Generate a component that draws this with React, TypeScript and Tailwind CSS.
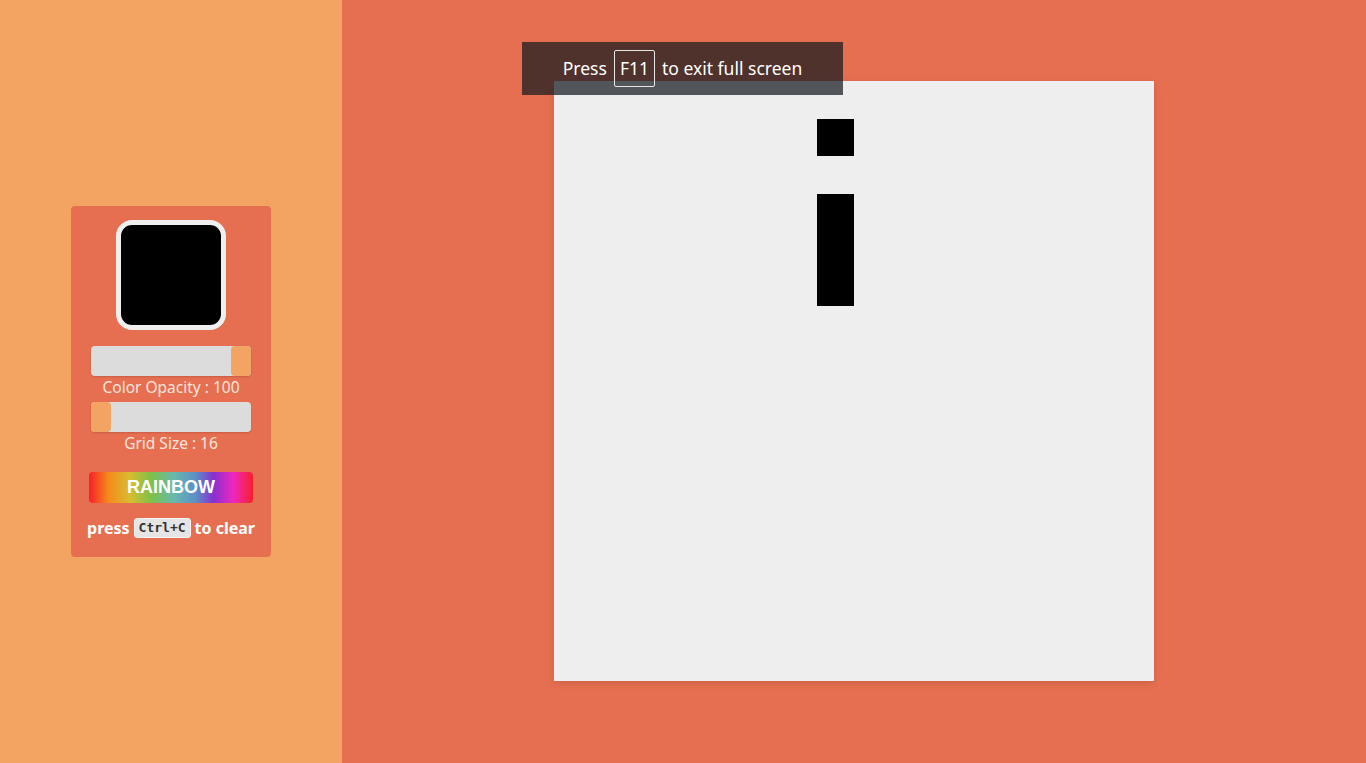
import { useState } from "react";

const SIZE = 16;
const FILLED = new Set(["1-7", "3-7", "4-7", "5-7"]);

function Slider({ value, side }: { value: number; side: "left" | "right" }) {
  return (
    <div className="relative h-[30px] w-[160px] rounded-[4px] bg-[#dcdcdc] shadow-[0_1px_2px_rgba(0,0,0,0.15)]">
      <div
        className={
          side === "right"
            ? "absolute right-0 top-0 h-[30px] w-[20px] rounded-[4px] bg-[#f3a462]"
            : "absolute left-0 top-0 h-[30px] w-[20px] rounded-[4px] bg-[#f3a462]"
        }
        aria-label={String(value)}
      />
    </div>
  );
}

export default function App() {
  const [cells] = useState(() =>
    Array.from({ length: SIZE * SIZE }, (_, i) =>
      FILLED.has(`${Math.floor(i / SIZE)}-${i % SIZE}`),
    ),
  );

  return (
    <div className="relative flex h-[763px] w-full font-['Noto_Sans',sans-serif]">
      {/* Sidebar */}
      <aside className="flex w-[342px] shrink-0 items-center justify-center bg-[#f3a462]">
        <div className="mb-px flex w-[200px] flex-col items-center rounded-[4px] bg-[#e76f51] px-[20px] pb-[17px] pt-[14px]">
          <div className="h-[110px] w-[110px] rounded-[16px] border-[5px] border-[#efefef] bg-black" />
          <div className="mt-[16px]">
            <Slider value={100} side="right" />
          </div>
          <p className="mt-[1px] text-[15.5px] leading-[20px] text-[#f8e6de]">
            Color Opacity : 100
          </p>
          <div className="mt-[5px]">
            <Slider value={16} side="left" />
          </div>
          <p className="mt-[1px] text-[15.5px] leading-[20px] text-[#f8e6de]">
            Grid Size : 16
          </p>
          <button className="mt-[19px] h-[31px] w-[164px] rounded-[4px] bg-[linear-gradient(90deg,#f81f2a_0%,#f58a1c_12%,#d8bd2f_25%,#7dc04a_38%,#68b8b0_52%,#5d8fc4_65%,#8a2fcf_76%,#ee27c0_88%,#f81f2a_100%)] font-['Liberation_Sans',sans-serif] text-[18px] font-bold text-white">
            RAINBOW
          </button>
          <p className="mt-[13px] flex shrink-0 items-center gap-[4px] whitespace-nowrap text-[16px] leading-[24px] font-bold text-white">
            press
            <kbd className="rounded-[3px] border border-[#f4f4f4] bg-[#e5e5e5] px-[4px] font-['DejaVu_Sans_Mono',monospace] text-[13px] leading-[18px] font-bold text-[#333]">
              Ctrl+C
            </kbd>
            to clear
          </p>
        </div>
      </aside>

      {/* Canvas area */}
      <main className="flex flex-1 items-center justify-center bg-[#e76f51]">
        <div className="mb-px grid h-[600px] w-[600px] grid-cols-16 grid-rows-16 bg-[#eeeeee] shadow-[0_2px_8px_rgba(0,0,0,0.12)]">
          {cells.map((on, i) => (
            <div key={i} className={on ? "bg-black" : ""} />
          ))}
        </div>
      </main>

      {/* Full screen notice */}
      <div className="absolute left-[522px] top-[42px] flex h-[53px] w-[321px] items-center justify-center gap-[7px] bg-[rgba(22,26,32,0.72)] text-[17.5px] text-white">
        <span>Press</span>
        <span className="flex h-[37px] items-center rounded-[2px] border border-[#e8e8e8] px-[5px]">
          F11
        </span>
        <span>to exit full screen</span>
      </div>
    </div>
  );
}
